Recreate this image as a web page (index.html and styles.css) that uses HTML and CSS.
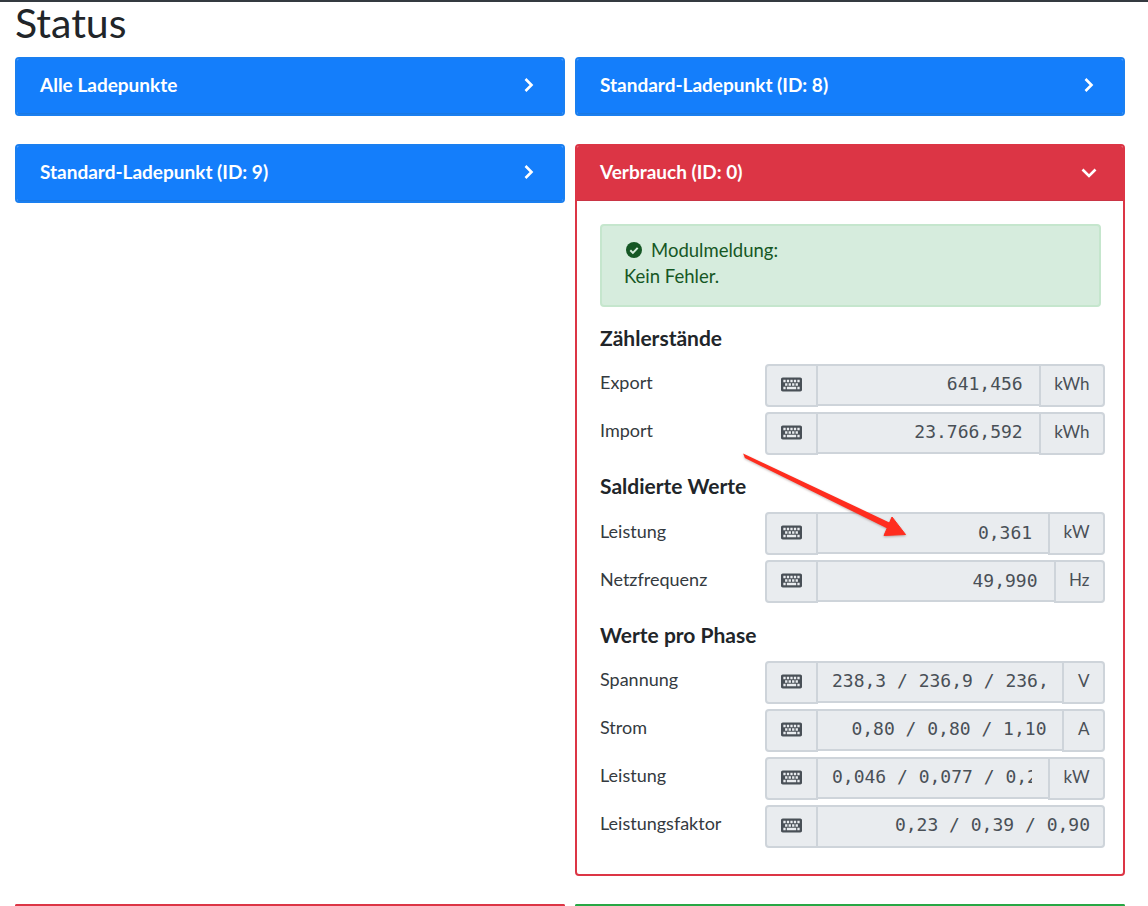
FILE: index.html
```html
<!DOCTYPE html>
<html lang="de">
<head>
<meta charset="utf-8">
<title>Status</title>
<link rel="stylesheet" href="styles.css">
</head>
<body>
<svg class="defs" width="0" height="0" aria-hidden="true">
  <symbol id="kbd" viewBox="0 0 576 512">
    <path fill-rule="evenodd" d="M528 448H48c-26.5 0-48-21.5-48-48V112c0-26.5 21.5-48 48-48h480c26.5 0 48 21.5 48 48v288c0 26.5-21.500 48-48 48zM64 128v64h64v-64zm96 0v64h64v-64zm96 0v64h64v-64zm96 0v64h64v-64zm96 0v64h64v-64zM112 224v64h64v-64zm96 0v64h64v-64zm96 0v64h64v-64zm96 0v64h64v-64zM64 320v64h64v-64zm96 0v64h256v-64zm288 0v64h64v-64z"/>
  </symbol>
  <symbol id="right" viewBox="0 0 12 16">
    <path d="M2.500 2l6 6-6 6" fill="none" stroke="currentColor" stroke-width="2.600"/>
  </symbol>
</svg>
<main class="page">
  <h1 class="title">Status</h1>
  <div class="cards">
    <section class="card card-blue">
      <header class="card-head"><span>Alle Ladepunkte</span><svg class="chev"><use href="#right"/></svg></header>
    </section>
    <section class="card card-blue">
      <header class="card-head"><span>Standard-Ladepunkt (ID: 8)</span><svg class="chev"><use href="#right"/></svg></header>
    </section>
    <section class="card card-blue">
      <header class="card-head"><span>Standard-Ladepunkt (ID: 9)</span><svg class="chev"><use href="#right"/></svg></header>
    </section>
    <section class="card card-red">
      <header class="card-head"><span>Verbrauch (ID: 0)</span>
        <svg class="chev-down" viewBox="0 0 16 10"><path d="M1.500 1.500L8 8l6.500-6.500" fill="none" stroke="currentColor" stroke-width="2.600"/></svg>
      </header>
      <div class="card-body">
        <div class="alert">
          <div class="alert-line">
            <svg class="check" viewBox="0 0 16 16"><circle cx="8" cy="8" r="8" fill="currentColor"/><path d="M4.300 8.300l2.600 2.600 4.800-5" fill="none" stroke="#d6ecdd" stroke-width="2"/></svg>
            <span>Modulmeldung:</span>
          </div>
          <div>Kein Fehler.</div>
        </div>

        <h3 class="section">Zählerstände</h3>
        <div class="rows">
          <div class="row"><span class="label">Export</span><div class="group"><span class="pre"><svg class="kbd"><use href="#kbd"/></svg></span><div class="val"><span>641,456</span></div><span class="unit">kWh</span></div></div>
          <div class="row"><span class="label">Import</span><div class="group"><span class="pre"><svg class="kbd"><use href="#kbd"/></svg></span><div class="val"><span>23.766,592</span></div><span class="unit">kWh</span></div></div>
        </div>

        <h3 class="section">Saldierte Werte</h3>
        <div class="rows rows-mid">
          <div class="row"><span class="label">Leistung</span><div class="group"><span class="pre"><svg class="kbd"><use href="#kbd"/></svg></span><div class="val"><span>0,361</span></div><span class="unit">kW</span></div></div>
          <div class="row"><span class="label">Netzfrequenz</span><div class="group"><span class="pre"><svg class="kbd"><use href="#kbd"/></svg></span><div class="val"><span>49,990</span></div><span class="unit">Hz</span></div></div>
        </div>

        <h3 class="section section-phase">Werte pro Phase</h3>
        <div class="rows">
          <div class="row"><span class="label">Spannung</span><div class="group"><span class="pre"><svg class="kbd"><use href="#kbd"/></svg></span><div class="val"><span>238,3 / 236,9 / 236,7</span></div><span class="unit">V</span></div></div>
          <div class="row"><span class="label">Strom</span><div class="group"><span class="pre"><svg class="kbd"><use href="#kbd"/></svg></span><div class="val"><span>0,80 / 0,80 / 1,10</span></div><span class="unit">A</span></div></div>
          <div class="row"><span class="label">Leistung</span><div class="group"><span class="pre"><svg class="kbd"><use href="#kbd"/></svg></span><div class="val"><span>0,046 / 0,077 / 0,238</span></div><span class="unit">kW</span></div></div>
          <div class="row"><span class="label">Leistungsfaktor</span><div class="group"><span class="pre"><svg class="kbd"><use href="#kbd"/></svg></span><div class="val val-end"><span>0,23 / 0,39 / 0,90</span></div></div></div>
        </div>
      </div>
    </section>
    <section class="card card-red card-stub"></section>
    <section class="card card-green card-stub"></section>
  </div>
  <svg class="arrow" width="1148" height="906" viewBox="0 0 1148 906" aria-hidden="true">
    <path d="M744.500 455L745.500 457.500 889 528.500 891 524z" fill="#ff2d1f" stroke="#ff2d1f" stroke-width="1.500"/>
    <path d="M905.500 534.500L884 535.500 892 517z" fill="#ff2d1f" stroke="#ff2d1f" stroke-width="1" stroke-linejoin="round"/>
  </svg>
</main>
</body>
</html>
```

FILE: styles.css
```css
* { box-sizing: border-box; }
html { height: 906px; overflow: hidden; }
html, body { margin: 0; padding: 0; }
body {
  font-family: Lato, "Liberation Sans", sans-serif;
  font-size: 18px;
  font-weight: 400;
  line-height: 26px;
  color: #343a40;
  background: #fff;
}
.defs { position: absolute; }
.page {
  position: relative;
  height: 906px;
  border-top: 2px solid #343a40;
  padding: 0 23px 0 15px;
}
.title {
  margin: 0 0 13px;
  color: #212529;
  font-size: 41px;
  font-weight: 400;
  line-height: 42px;
}
.cards {
  display: grid;
  grid-template-columns: 550px 550px;
  column-gap: 10px;
  row-gap: 28px;
  align-items: start;
}
.card {
  border: 2px solid;
  border-radius: 4px;
  overflow: hidden;
  background: #fff;
}
.card-blue { border-color: #1a7ff0; }
.card-red { border-color: #dc3545; }
.card-green { border-color: #28a745; }
.card-stub { height: 2px; border-bottom: 0; border-radius: 4px 4px 0 0; }
.card-head {
  display: flex;
  align-items: center;
  justify-content: space-between;
  height: 55px;
  padding: 0 22px 3px 23px;
  color: #fff;
  font-size: 19px;
  font-weight: 700;
}
.card-blue .card-head { background: #147efb; border-bottom: 1px solid #1b78e2; }
.card-red .card-head { background: #dc3545; border-bottom: 1px solid #c93545; }
.chev { width: 12px; height: 16px; margin-right: 6px; }
.chev-down { width: 16px; height: 10px; margin-right: 4px; margin-top: 2px; }
.card-body { padding: 23px 18px 26px 23px; }
.alert {
  margin: 0 4px 19px 0;
  height: 83px;
  padding: 11px 22px;
  background: #d6ecdd;
  border: 2px solid #c5e6cd;
  border-radius: 4px;
  color: #155724;
  font-size: 18.500px;
}
.alert-line { display: flex; align-items: center; gap: 9px; padding-left: 2px; }
.check { width: 16px; height: 16px; flex: none; }
.section {
  margin: 0 0 14px;
  color: #212529;
  font-size: 21px;
  line-height: 24px;
  font-weight: 700;
}
.section-phase { margin-top: 20px; }
.rows { display: flex; flex-direction: column; gap: 5px; margin-bottom: 19px; }
.rows:last-child { margin-bottom: 0; }
.row { display: flex; align-items: flex-start; height: 43px; }
.label { width: 165px; flex: none; line-height: 36px; }
.rows-mid .label { line-height: 38px; }
.group { display: flex; align-items: flex-start; width: 340px; flex: none; color: #495057; }
.pre, .unit {
  display: flex;
  align-items: center;
  justify-content: center;
  flex: none;
  height: 43px;
  background: #e9ecef;
  border: 2px solid #ced4da;
}
.pre { width: 53px; border-radius: 4px 0 0 4px; }
.unit {
  padding: 0 13.500px;
  border-radius: 0 4px 4px 0;
  color: #495057;
  font-size: 17px;
  line-height: 36px;
  align-items: flex-start;
}
.kbd { width: 21px; height: 19px; margin-bottom: 2px; fill: #495057; }
.val {
  flex: 1;
  min-width: 0;
  height: 42px;
  padding: 0 16px 0 14px;
  background: #e9ecef;
  border: solid #ced4da;
  border-width: 2px 0;
  text-align: right;
  font-family: "DejaVu Sans Mono", "Liberation Mono", monospace;
  font-size: 18px;
  line-height: 35px;
}
.rows-mid .val { line-height: 37px; }
.val span { display: block; overflow: hidden; white-space: nowrap; }
.val-end { padding-right: 13px; border-right-width: 2px; border-radius: 0 4px 4px 0; height: 43px; }
.arrow { position: absolute; left: 0; top: -2px; pointer-events: none; filter: drop-shadow(0 1px 1px rgba(90, 40, 30, .35)); }
```
